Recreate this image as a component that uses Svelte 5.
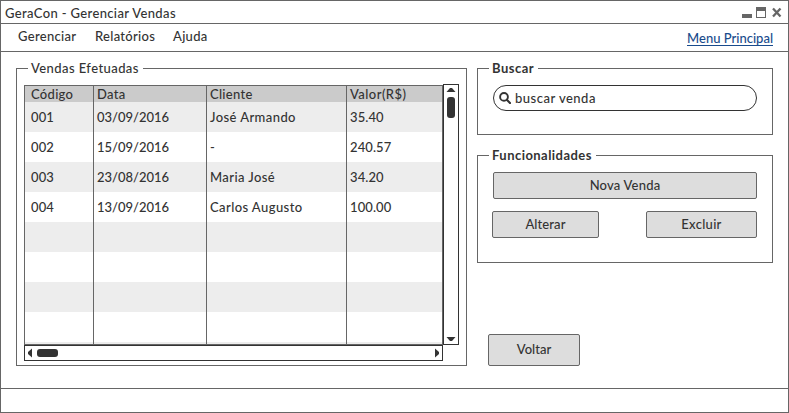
<script>
  const menus = ['Gerenciar', 'Relatórios', 'Ajuda'];
  const columns = ['Código', 'Data', 'Cliente', 'Valor(R$)'];
  const rows = [
    ['001', '03/09/2016', 'José Armando', '35.40'],
    ['002', '15/09/2016', '-', '240.57'],
    ['003', '23/08/2016', 'Maria José', '34.20'],
    ['004', '13/09/2016', 'Carlos Augusto', '100.00'],
    ['', '', '', ''],
    ['', '', '', ''],
    ['', '', '', ''],
    ['', '', '', ''],
    ['', '', '', '']
  ];
</script>

<div class="window">
  <header class="titlebar">
    <span class="title">GeraCon - Gerenciar Vendas</span>
    <svg class="controls" width="40" height="11" viewBox="0 0 40 11">
      <rect x="0" y="7" width="10" height="4" fill="#666" />
      <path d="M14 0h10v11H14z M15 4v6h8V4z" fill="#666" fill-rule="evenodd" />
      <path d="M31 1.5L38.5 9.5M38.5 1.5L31 9.5" stroke="#666" stroke-width="2.3" />
    </svg>
  </header>

  <nav class="menubar">
    {#each menus as menu, i}
      <span class="menu m{i}">{menu}</span>
    {/each}
    <span class="link">Menu Principal</span>
  </nav>

  <main>
    <section class="group sales">
      <span class="legend">Vendas Efetuadas</span>
      <div class="grid-top">
        <div class="table">
          <div class="tr head">
            {#each columns as c, i}<div class="td h{i}">{c}</div>{/each}
          </div>
          {#each rows as row}
            <div class="tr">
              {#each row as cell, i}<div class="td c{i}">{cell}</div>{/each}
            </div>
          {/each}
        </div>
        <div class="vbar">
          <svg width="10" height="5" viewBox="0 0 10 5"><path d="M0.5 5L4 1H6L9.5 5z" fill="#333" /></svg>
          <div class="vthumb"></div>
          <svg class="end" width="10" height="5" viewBox="0 0 10 5"><path d="M0.5 0H9.5L6 4H4z" fill="#333" /></svg>
        </div>
      </div>
      <div class="hbar">
        <svg width="5" height="10" viewBox="0 0 5 10"><path d="M5 0.5V9.5L1 6V4z" fill="#333" /></svg>
        <div class="hthumb"></div>
        <svg class="end" width="5" height="10" viewBox="0 0 5 10"><path d="M0 0.5V9.5L4 6V4z" fill="#333" /></svg>
      </div>
    </section>

    <aside>
      <section class="group search">
        <span class="legend bold">Buscar</span>
        <div class="field">
          <svg width="12" height="12" viewBox="0 0 12 12" fill="none" stroke="#333">
            <circle cx="5" cy="4.9" r="3.9" stroke-width="1.9" />
            <path d="M7.8 7.7L11 11" stroke-width="2.1" stroke-linecap="round" />
          </svg>
          <span class="query">buscar venda</span>
        </div>
      </section>

      <section class="group actions">
        <span class="legend bold func">Funcionalidades</span>
        <button class="new"><span>Nova Venda</span></button>
        <div class="pair">
          <button class="edit"><span>Alterar</span></button>
          <button class="remove"><span>Excluir</span></button>
        </div>
      </section>

      <button class="back"><span>Voltar</span></button>
    </aside>
  </main>

  <footer></footer>
</div>

<style>
  .window, .window * { box-sizing: border-box; }
  .window {
    width: 789px;
    height: 413px;
    border: 1px solid #666;
    background: #fff;
    color: #333;
    font: 500 13px/16px Lato, "Open Sans", sans-serif;
    letter-spacing: 0.3px;
    white-space: nowrap;
    display: flex;
    flex-direction: column;
    overflow: hidden;
  }
  .titlebar {
    height: 23px;
    border-bottom: 1px solid #666;
    display: flex;
    justify-content: space-between;
    padding: 4px 6px 0 4px;
  }
  .title { letter-spacing: 0.36px; }
  .controls { margin-top: 2px; }
  .menubar {
    height: 28px;
    border-bottom: 1px solid #666;
    display: flex;
    padding: 4px 15px 0 17px;
  }
  .m0 { width: 77px; }
  .m1 { width: 78px; }
  .link {
    margin: 2px 0 0 auto;
    height: 16px;
    color: #194b8c;
    border-bottom: 1px solid #194b8c;
    letter-spacing: 0;
  }
  main { height: 336px; display: flex; padding: 16px 15px 0; }
  .group { border: 1px solid #666; position: relative; }
  .legend {
    position: absolute;
    top: -9px;
    left: 11px;
    padding: 0 4px 0 3px;
    background: #fff;
  }
  .bold { font-weight: 700; letter-spacing: 0.5px; }
  .func { letter-spacing: 0.45px; }
  .sales { width: 451px; height: 298px; padding: 15px 7px 0; }
  .sales .legend { letter-spacing: 0.42px; }
  .grid-top { display: flex; align-items: flex-end; }
  .table {
    width: 419px;
    height: 260px;
    border: 1px solid #666;
    overflow: hidden;
  }
  .tr { display: grid; grid-template-columns: 69px 113px 140px 1fr; height: 30px; }
  .tr:nth-child(even) { background: #ededed; }
  .tr.head { height: 16px; background: #cbcbcb; }
  .td { border-right: 1px solid #666; padding: 7px 0 0 3px; }
  .td:first-child { padding-left: 6px; }
  .td:last-child { border-right: 0; }
  .head .td { padding-top: 1px; line-height: 15px; }
  .c0 { letter-spacing: 0.1px; }
  .c1 { letter-spacing: 0; }
  .c2 { letter-spacing: 0.42px; }
  .c3 { letter-spacing: 0.1px; }
  .h3 { letter-spacing: 0.45px; }
  .vbar {
    width: 16px;
    height: 261px;
    border: 1px solid #333;
    display: flex;
    flex-direction: column;
    align-items: center;
    padding: 2px 0;
  }
  .vthumb { width: 8px; height: 21px; margin-top: 5px; border-radius: 3px; background: #333; }
  .vbar .end { margin-top: auto; }
  .hbar {
    width: 419px;
    height: 16px;
    border: 1px solid #333;
    display: flex;
    align-items: center;
    padding: 0 2px;
  }
  .hthumb { width: 21px; height: 8px; margin-left: 5px; border-radius: 3px; background: #333; }
  .hbar .end { margin-left: auto; }
  aside { width: 296px; margin-left: 10px; }
  .search { height: 67px; padding: 16px 15px 0; }
  .field {
    width: 264px;
    height: 26px;
    border: 1px solid #333;
    border-radius: 13px;
    display: flex;
    align-items: center;
    padding: 0 0 1px 5px;
  }
  .query { margin-left: 4px; letter-spacing: 0.5px; }
  .actions { height: 108px; margin-top: 20px; padding: 16px 15px 0 14px; }
  button {
    display: block;
    height: 27px;
    padding: 0;
    border: 1px solid #666;
    border-radius: 2px;
    background: #ddd;
    color: inherit;
    font: inherit;
    letter-spacing: inherit;
  }
  button span { position: relative; top: -1px; }
  .new { width: 264px; margin-left: 1px; letter-spacing: 0.2px; }
  .pair { display: flex; justify-content: space-between; margin: 12px 1px 0 0; width: 265px; }
  .edit { width: 107px; letter-spacing: 0.1px; }
  .remove { width: 111px; }
  .back { width: 92px; height: 32px; margin: 71px 0 0 11px; letter-spacing: 0; }
  footer { height: 24px; border-top: 1px solid #666; }
</style>
